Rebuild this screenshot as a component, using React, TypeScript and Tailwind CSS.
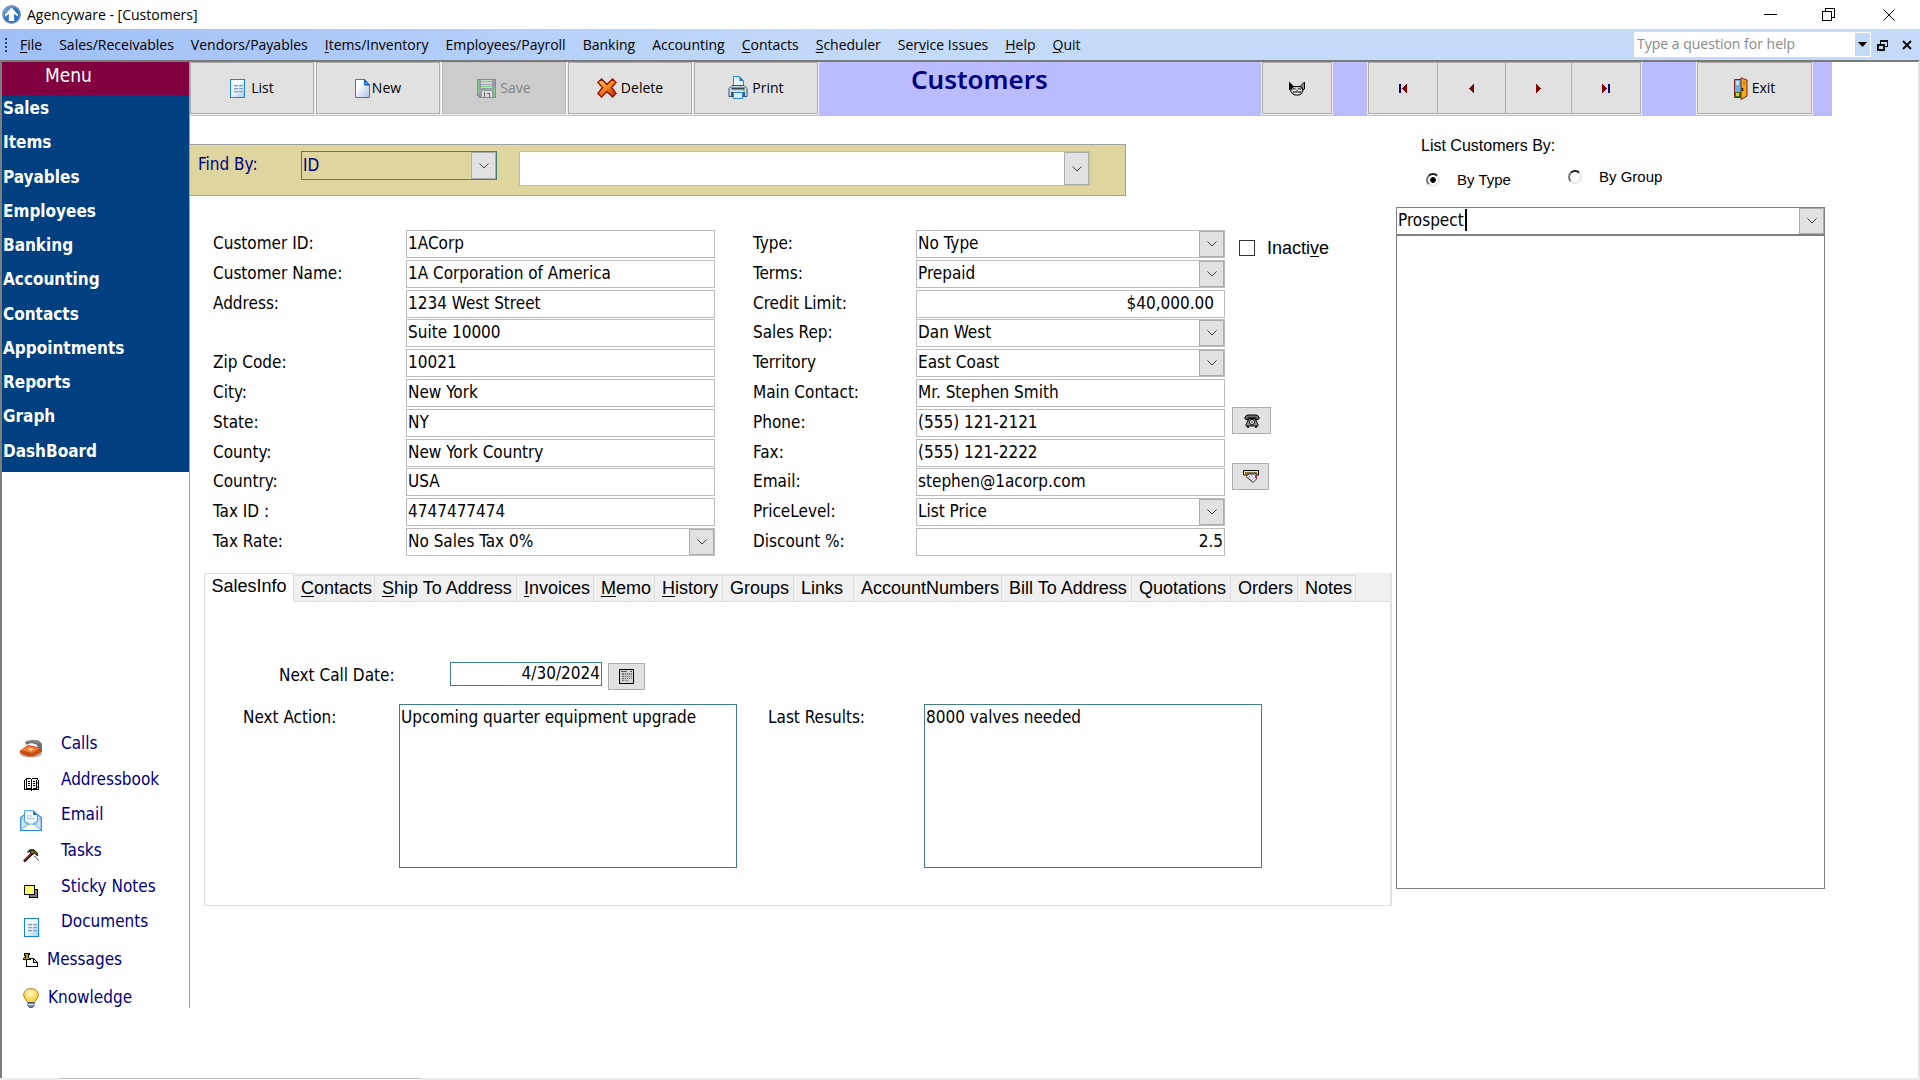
import { useState } from 'react';
import type { ReactNode } from 'react';

const TAHOMA = "font-['DejaVu_Sans_Condensed','DejaVu_Sans',sans-serif]";
const SEGOE = "font-['Open_Sans','Noto_Sans',sans-serif]";
const ARIAL = "font-['Liberation_Sans',Arial,sans-serif]";

// text before the accelerator, the accelerator, text after it
type Accel = [string, string, string];

const menuItems: Accel[] = [
  ['', 'F', 'ile'],
  ['Sales/Receivables', '', ''],
  ['Vendors/Payables', '', ''],
  ['', 'I', 'tems/Inventory'],
  ['Employees/Payroll', '', ''],
  ['Banking', '', ''],
  ['Accounting', '', ''],
  ['', 'C', 'ontacts'],
  ['', 'S', 'cheduler'],
  ['Ser', 'v', 'ice Issues'],
  ['', 'H', 'elp'],
  ['', 'Q', 'uit'],
];

const navItems = [
  'Sales',
  'Items',
  'Payables',
  'Employees',
  'Banking',
  'Accounting',
  'Contacts',
  'Appointments',
  'Reports',
  'Graph',
  'DashBoard',
];

const tabs: { label: Accel; width: string }[] = [
  { label: ['', 'C', 'ontacts'], width: 'w-[81px]' },
  { label: ['', 'S', 'hip To Address'], width: 'w-[142px]' },
  { label: ['', 'I', 'nvoices'], width: 'w-[77px]' },
  { label: ['', 'M', 'emo'], width: 'w-[61px]' },
  { label: ['', 'H', 'istory'], width: 'w-[68px]' },
  { label: ['Groups', '', ''], width: 'w-[71px]' },
  { label: ['Links', '', ''], width: 'w-[60px]' },
  { label: ['AccountNumbers', '', ''], width: 'w-[148px]' },
  { label: ['Bill To Address', '', ''], width: 'w-[130px]' },
  { label: ['Quotations', '', ''], width: 'w-[99px]' },
  { label: ['Orders', '', ''], width: 'w-[67px]' },
  { label: ['Notes', '', ''], width: 'w-[58px]' },
];

type FieldDef = { label: string; value: string; kind?: 'select' | 'money' | 'number' };

const leftFields: FieldDef[] = [
  { label: 'Customer ID:', value: '1ACorp' },
  { label: 'Customer Name:', value: '1A Corporation of America' },
  { label: 'Address:', value: '1234 West Street' },
  { label: '', value: 'Suite 10000' },
  { label: 'Zip Code:', value: '10021' },
  { label: 'City:', value: 'New York' },
  { label: 'State:', value: 'NY' },
  { label: 'County:', value: 'New York Country' },
  { label: 'Country:', value: 'USA' },
  { label: 'Tax ID :', value: '4747477474' },
  { label: 'Tax Rate:', value: 'No Sales Tax 0%', kind: 'select' },
];

const rightFields: FieldDef[] = [
  { label: 'Type:', value: 'No Type', kind: 'select' },
  { label: 'Terms:', value: 'Prepaid', kind: 'select' },
  { label: 'Credit Limit:', value: '$40,000.00', kind: 'money' },
  { label: 'Sales Rep:', value: 'Dan West', kind: 'select' },
  { label: 'Territory', value: 'East Coast', kind: 'select' },
  { label: 'Main Contact:', value: 'Mr. Stephen Smith' },
  { label: 'Phone:', value: '(555) 121-2121' },
  { label: 'Fax:', value: '(555) 121-2222' },
  { label: 'Email:', value: 'stephen@1acorp.com' },
  { label: 'PriceLevel:', value: 'List Price', kind: 'select' },
  { label: 'Discount %:', value: '2.5', kind: 'number' },
];

function AccelText({ text }: { text: Accel }) {
  return (
    <>
      {text[0]}
      {text[1] && <span className="underline underline-offset-2">{text[1]}</span>}
      {text[2]}
    </>
  );
}

/* ---------- icons ---------- */

function LogoIcon() {
  return (
    <svg width="19" height="19" viewBox="0 0 19 19">
      <defs>
        <linearGradient id="logo" x1="0" y1="0" x2="1" y2="1">
          <stop offset="0" stopColor="#8fb6e4" />
          <stop offset="0.5" stopColor="#2f6fc0" />
          <stop offset="1" stopColor="#1d6fd6" />
        </linearGradient>
      </defs>
      <circle cx="9.5" cy="9.5" r="8.800" fill="url(#logo)" stroke="#7d97b5" strokeWidth="1.200" />
      <path d="M9.500 2.500 16 9.500v2l-4-2.500.300 7H6.700L7 9 3 11.500v-2z" fill="#fff" />
    </svg>
  );
}

function SheetIcon() {
  return (
    <svg width="15" height="19" viewBox="0 0 15 19" shapeRendering="crispEdges">
      <defs>
        <linearGradient id="sheet" x1="0" y1="0" x2="1" y2="1">
          <stop offset="0.4" stopColor="#f4faff" />
          <stop offset="1" stopColor="#a9c9ee" />
        </linearGradient>
      </defs>
      <rect x="0.5" y="0.5" width="14" height="18" fill="url(#sheet)" stroke="#1484dc" />
      <path d="M4 6.500h4M9 6.500h4M4 9.500h4M9 9.500h4M4 12.500h4M9 12.500h4" stroke="#7f9bc4" />
      <path d="M4 7.500h4M9 7.500h4M4 10.500h4M9 10.500h4M4 13.500h4M9 13.500h4" stroke="#c3d3ea" />
    </svg>
  );
}

function NewIcon() {
  return (
    <svg width="15" height="19" viewBox="0 0 15 19">
      <defs>
        <linearGradient id="page" x1="0" y1="0" x2="1" y2="1">
          <stop offset="0.3" stopColor="#ffffff" />
          <stop offset="1" stopColor="#a6c3e6" />
        </linearGradient>
      </defs>
      <path d="M.5.5H9.500L14.500 6V18.500H.500z" fill="url(#page)" stroke="#1484dc" />
      <path d="M9.500.500V6h5z" fill="#0c63b8" stroke="#0c63b8" />
      <path d="M10.500 3v2h2z" fill="#9fd0f7" />
    </svg>
  );
}

function SaveIcon() {
  return (
    <svg width="19" height="19" viewBox="0 0 19 19" shapeRendering="crispEdges">
      <path d="M.5.5h18v18H3L.500 16z" fill="#9a9da8" stroke="#8488ac" />
      <rect x="4" y="1" width="11" height="8" fill="#c9dcc8" />
      <path d="M4 2.500h11M4 7.500h11" stroke="#74d882" />
      <path d="M4 5h11" stroke="#b7a0c8" />
      <rect x="5" y="12" width="10" height="6" fill="#dcdcdc" />
      <path d="M7.500 13v5M10 14.500h2v3" stroke="#66666f" fill="none" />
      <path d="M17.500 9v9M1.500 1v14" stroke="#7fcf8a" />
    </svg>
  );
}

function DeleteIcon() {
  return (
    <svg width="20" height="20" viewBox="0 0 20 20">
      <defs>
        <linearGradient id="del" x1="0" y1="0" x2="0.7" y2="1">
          <stop offset="0" stopColor="#ffd14a" />
          <stop offset="0.5" stopColor="#f7941e" />
          <stop offset="1" stopColor="#c8320e" />
        </linearGradient>
      </defs>
      <path
        d="M4.500 1 10 6.500 15.500 1 19 4.500l-4.500 5L19 15.500 15.500 19 10 13.500 4.500 19 1 15.500l4.500-6L1 4.500z"
        fill="url(#del)"
        stroke="#9c1506"
        strokeWidth="1.5"
      />
    </svg>
  );
}

function PrintIcon() {
  return (
    <svg width="20" height="24" viewBox="0 0 20 24">
      <path d="M5.500 11V.500h6L15.500 5v6z" fill="#e8f3ff" stroke="#1e88e5" />
      <path d="M11.500.500V5h4z" fill="#1e73c4" />
      <path d="M1 12.500 4 9.500h12l3 3v8H1z" fill="#d4dde6" stroke="#24527c" />
      <path d="M3.500 12.500h13" stroke="#2f4558" strokeWidth="2" />
      <path d="M3 16h14v4H3z" fill="#3f5b75" />
      <path d="M5.500 16.500h9v6h-9z" fill="#dceeff" stroke="#1e88e5" />
      <path d="M15 14.500h2" stroke="#4caf50" />
    </svg>
  );
}

function CatIcon() {
  return (
    <svg width="16" height="15" viewBox="0 0 16 15">
      <path d="M0 .500 5 5.500 3 6.500 1 9H0z" fill="#000" />
      <path d="M15.500 1v7l-1.500 1-1-2.500-2-1z" fill="#8d8d8d" stroke="#000" />
      <path d="M3 6.500 5 5.500h6l2 1.500 1 3-2 3-2 1H6l-2-1-2.500-3z" fill="#c9c9c9" stroke="#000" />
      <path d="M3.500 8h3M9 8h3M4 11h8" stroke="#000" />
      <path d="M4 9.300h3M8.500 9.300h3M6 12.300h4" stroke="#fff" />
      <path d="M7 10h2" stroke="#555" />
    </svg>
  );
}

function ExitIcon() {
  return (
    <svg width="14" height="23" viewBox="0 0 14 23">
      <path d="M.5 2.500h8v18h-8z" fill="#5fb4ee" stroke="#8b1a10" />
      <path d="M2 4h3v4H2z" fill="#b9e2ff" />
      <path d="M1 15h6v5H1z" fill="#237a2c" />
      <path d="M2 16h3v3H2z" fill="#d7d32a" />
      <path d="M7 .800 13 3v16l-6 3.500z" fill="#f0a818" stroke="#8b1a10" />
      <path d="M9 4.500h2v3H9z" fill="#c98a10" />
      <path d="M8.500 11v3" stroke="#201000" strokeWidth="1.500" />
    </svg>
  );
}

function PrevArrow() {
  return (
    <svg width="5" height="9" viewBox="0 0 5 9" shapeRendering="crispEdges">
      <path d="M5 0v9L0 4.500z" fill="#800000" />
    </svg>
  );
}

function NextArrow() {
  return (
    <svg width="5" height="9" viewBox="0 0 5 9" shapeRendering="crispEdges">
      <path d="M0 0v9l5-4.500z" fill="#800000" />
    </svg>
  );
}

function Bar() {
  return (
    <svg width="2" height="9" viewBox="0 0 2 9">
      <rect width="2" height="9" fill="#000080" />
    </svg>
  );
}

function PhoneIcon() {
  return (
    <svg width="16" height="14" viewBox="0 0 16 14">
      <path d="M1 5V3l2-2h10l2 2v2l-3 1V4H4v2z" fill="#6b6b6b" stroke="#000" />
      <path d="M5 4.500h6l3 6V12H2v-1.500z" fill="#8c8c8c" stroke="#000" />
      <circle cx="8" cy="8" r="2.500" fill="#fff" stroke="#000" />
      <circle cx="8" cy="8" r="0.800" fill="#000" />
      <path d="M3 13h2M11 13h2" stroke="#000" strokeWidth="1.500" />
    </svg>
  );
}

function MailSlotIcon() {
  return (
    <svg width="16" height="13" viewBox="0 0 16 13">
      <path d="M.5.500h15v4.500H.500z" fill="#ffe27a" stroke="#000" />
      <path d="M2 3h12" stroke="#000" />
      <path d="M3 6.500 6 4h7.500v5L10 12.500z" fill="#f4f4ff" stroke="#333" />
      <path d="M6 6l4 4M8 5l3.500 4M5.500 7.500 9 11" stroke="#4a4ad0" strokeDasharray="1 1" />
      <rect x="12" y="5" width="2" height="3" fill="#e02020" />
    </svg>
  );
}

function CalendarIcon() {
  return (
    <svg width="15" height="15" viewBox="0 0 15 15" shapeRendering="crispEdges">
      <rect x="0.500" y="0.500" width="14" height="14" fill="#d6d6d6" stroke="#000" />
      <path d="M2 2.500h6M11 2.500h2" stroke="#555" />
      <path d="M3 4h10v6h-4v2H3z" fill="#777" />
      <path d="M3 6.500h10M3 8.500h10M3 10.500h6M5.500 4v8M7.500 4v8M9.500 4v6M11.500 4v6" stroke="#c4c4c4" />
    </svg>
  );
}

function RedPhoneIcon() {
  return (
    <svg width="24" height="19" viewBox="0 0 24 19">
      <ellipse cx="12" cy="15" rx="11" ry="3.500" fill="#b8b0a8" />
      <path d="M1 11.500 9 6l14 3v4l-9 4.500H9L1 14z" fill="#c94a12" />
      <path d="M2 11 9 7l12 2.500-8 4.500z" fill="#ee7a34" />
      <path d="M8 10.500 11 9l4 1-3 2z" fill="#f9c49a" />
      <path d="M6 3.500C9 0 18 0 21.500 3c2 2 2 5 .5 7l-3-1c0-3-2-4-5-4.500S9 5 8 6z" fill="#6e6e6e" />
      <path d="M9 2.500c4-1.500 8-.500 11 1.500" stroke="#aaa" fill="none" />
    </svg>
  );
}

function BookIcon() {
  return (
    <svg width="15" height="13" viewBox="0 0 15 13" shapeRendering="crispEdges">
      <path d="M.5 2.500 2 1.500V.500h4l1.500 1L9 .500h4v1l1.500 1v9H9L7.500 12.500 6 11.500H.500z" fill="#fff" stroke="#000" />
      <path d="M7.500 2v10M2.500 2v8h4M12.500 2v8h-4" stroke="#000" fill="none" />
      <path d="M4 3.500h2M4 5.500h2M4 7.500h2M9 3.500h2M9 5.500h2M9 7.500h2" stroke="#000" />
      <path d="M13.500 4v2M13.500 8v2" stroke="#d09020" />
    </svg>
  );
}

function OpenMailIcon() {
  return (
    <svg width="22" height="21" viewBox="0 0 22 21">
      <path d="M.7 7.500 4 5h14l3.300 2.500v13H.700z" fill="#cfe4fb" stroke="#2b86de" strokeWidth="1.200" />
      <path d="M4.500 12V.700h9L17.500 4v8l-6.500 4z" fill="#f3f9ff" stroke="#4f9be6" />
      <path d="M13 .700V5h4.500z" fill="#1b73cf" />
      <path d="M7 6h5M7 8.500h8" stroke="#9dc3ec" />
      <path d="M1 8l8 6h4l8-6M1 20l7.500-7M21 20l-7.500-7" stroke="#7db4ec" fill="none" />
      <path d="M2 20l7-5h4l7 5z" fill="#fff" />
    </svg>
  );
}

function HammerIcon() {
  return (
    <svg width="17" height="13" viewBox="0 0 17 13">
      <path d="M1 12.500 9 4.500" stroke="#000" strokeWidth="2.500" />
      <path d="M1.500 11.500 8.500 4.500" stroke="#a83030" />
      <path d="M4.500 3 7 .800h4l3 3 .500 3-3-2.500L9 6 7.500 4V2.500z" fill="#6b6414" stroke="#000" />
      <path d="M11.500 7l4.500 5" stroke="#000" strokeDasharray="2 1" />
    </svg>
  );
}

function NoteIcon() {
  return (
    <svg width="14" height="13" viewBox="0 0 14 13" shapeRendering="crispEdges">
      <rect x="5.500" y="4.500" width="8" height="8" fill="#808080" stroke="#000" />
      <rect x="0.500" y="0.500" width="10" height="9" fill="#ffff70" stroke="#000" />
    </svg>
  );
}

function PinIcon() {
  return (
    <svg width="15" height="14" viewBox="0 0 15 14" shapeRendering="crispEdges">
      <path d="M3.500 13.500v-8h7l4 4v4z" fill="#fff" stroke="#000" />
      <path d="M10.500 6v3.500H14" stroke="#000" fill="none" />
      <path d="M1 .500h5v1L5 2.500v2l2 1v1H0v-1l2-1v-2L1 1.500z" fill="#b5ab18" stroke="#000" />
      <path d="M3.500 7v4" stroke="#000" />
    </svg>
  );
}

function BulbIcon() {
  return (
    <svg width="16" height="20" viewBox="0 0 16 20">
      <defs>
        <radialGradient id="bulb" cx="0.45" cy="0.35">
          <stop offset="0" stopColor="#fffbc8" />
          <stop offset="1" stopColor="#ffd34a" />
        </radialGradient>
      </defs>
      <path
        d="M8 .700C3.500.700.700 3.500.700 7c0 3 2.800 4.500 3.800 7.500h7c1-3 3.800-4.500 3.800-7.500C15.300 3.500 12.500.700 8 .700z"
        fill="url(#bulb)"
        stroke="#b07a12"
      />
      <path d="M5 14.500h6v3.500l-1.500 1.500h-3L5 18z" fill="#6f8ea8" stroke="#3f5a70" />
      <path d="M5 16.500h6" stroke="#dfe9f0" />
    </svg>
  );
}

function DropGlyph() {
  return (
    <svg width="10" height="6" viewBox="0 0 10 6" fill="none" stroke="#444">
      <path d="M.5.500 5 5 9.500.500" />
    </svg>
  );
}

/* ---------- controls ---------- */

function Combo({ id, label, value, box, frame = 'border-[#bcbcbc]' }: {
  id: string;
  label?: string;
  value: string;
  box: string;
  frame?: string;
}) {
  return (
    <div className={`relative ${box}`}>
      <select
        id={id}
        aria-label={label}
        defaultValue={value}
        className={`w-full h-full appearance-none border bg-transparent pl-px pr-7 pb-0.5 leading-6 outline-none ${frame}`}
      >
        <option value={value}>{value}</option>
      </select>
      <span className="pointer-events-none absolute inset-y-px right-px flex w-[25px] items-center justify-center border border-[#adadad] bg-[#e1e1e1]">
        <DropGlyph />
      </span>
    </div>
  );
}

function Fields({ fields, prefix, labelWidth }: { fields: FieldDef[]; prefix: string; labelWidth: string }) {
  return (
    <div className="flex h-[326px] flex-col justify-between">
      {fields.map((f, i) => {
        const id = `${prefix}-${i}`;
        return (
          <div key={id} className="flex h-7">
            <label htmlFor={id} className={`shrink-0 leading-[26px] ${labelWidth}`}>
              {f.label}
            </label>
            {f.kind === 'select' ? (
              <Combo id={id} value={f.value} box="h-7 w-[309px]" />
            ) : (
              <input
                id={id}
                type="text"
                aria-label={f.label ? undefined : 'Address line 2'}
                defaultValue={f.value}
                className={`h-7 w-[309px] border border-[#bcbcbc] pb-0.5 outline-none ${
                  f.kind === 'money' ? 'pr-2.5 text-right' : f.kind === 'number' ? 'pr-px text-right' : 'pl-px'
                }`}
              />
            )}
          </div>
        );
      })}
    </div>
  );
}

function ToolButton({ icon, children, label, width, gap = 'gap-1', disabled }: {
  icon: ReactNode;
  children?: ReactNode;
  label?: string;
  width: string;
  gap?: string;
  disabled?: boolean;
}) {
  return (
    <button
      type="button"
      disabled={disabled}
      aria-label={label}
      className={`flex h-[52px] items-center justify-center border border-[#adadad] bg-[#e1e1e1] text-sm disabled:border-[#bfbfbf] disabled:bg-[#cccccc] disabled:text-[#838383] ${width} ${gap}`}
    >
      {icon}
      {children}
    </button>
  );
}

function NavButton({ label, children, width }: { label: string; children: ReactNode; width: string }) {
  return (
    <button
      type="button"
      aria-label={label}
      className={`flex h-[52px] items-center justify-center gap-px border border-l-0 border-[#adadad] bg-[#e1e1e1] first:border-l ${width}`}
    >
      {children}
    </button>
  );
}

function IconButton({ label, children, width = 'w-[37px]' }: { label: string; children: ReactNode; width?: string }) {
  return (
    <button
      type="button"
      aria-label={label}
      className={`flex h-[27px] items-center justify-center border border-[#adadad] bg-[#e1e1e1] ${width}`}
    >
      {children}
    </button>
  );
}

function Shortcut({ icon, children }: { icon: ReactNode; children: ReactNode }) {
  return (
    <a href="#" className="flex flex-1">
      <span className="flex w-[54px] shrink-0 items-center justify-center">{icon}</span>
      <span className="pl-[3px] leading-6">{children}</span>
    </a>
  );
}

/* ---------- page parts ---------- */

function TitleBar() {
  return (
    <header className={`flex h-[29px] items-center bg-white pl-0.5 text-sm ${SEGOE}`}>
      <LogoIcon />
      <span className="pl-1.5">Agencyware - [Customers]</span>
      <div className="ml-auto flex items-center">
        <button type="button" aria-label="Minimize" className="flex w-[58px] justify-center">
          <svg width="13" height="13" viewBox="0 0 13 13" shapeRendering="crispEdges">
            <path d="M0 6.500h13" stroke="#000" />
          </svg>
        </button>
        <button type="button" aria-label="Restore" className="flex w-[58px] justify-center">
          <svg width="13" height="13" viewBox="0 0 13 13" fill="none" stroke="#000" shapeRendering="crispEdges">
            <path d="M.500 3.500h9v9h-9zM3.500 3V.500h9v9H10" />
          </svg>
        </button>
        <button type="button" aria-label="Close" className="flex w-[63px] justify-center">
          <svg width="12" height="12" viewBox="0 0 12 12" stroke="#000">
            <path d="M.5.500l11 11M11.500.500l-11 11" />
          </svg>
        </button>
      </div>
    </header>
  );
}

function MenuBar() {
  return (
    <nav
      className={`flex h-[31px] items-center bg-linear-to-r from-[#9fbff6] to-[#c4daf9] to-45% pl-[5px] text-sm ${SEGOE}`}
    >
      <span className="flex w-[15px] flex-col gap-0.5">
        <i className="size-0.5 bg-[#27417f]" />
        <i className="size-0.5 bg-[#27417f]" />
        <i className="size-0.5 bg-[#27417f]" />
        <i className="size-0.5 bg-[#27417f]" />
      </span>
      <div className="flex gap-[17px]">
        {menuItems.map((item) => (
          <a key={item.join('')} href="#" className="whitespace-nowrap">
            <AccelText text={item} />
          </a>
        ))}
      </div>
      <div className="ml-auto flex h-[25px] w-[237px] border border-white">
        <input
          type="text"
          aria-label="Help question"
          placeholder="Type a question for help"
          className="min-w-0 flex-1 bg-white pl-0.5 pb-0.5 outline-none placeholder:text-[#8a8a8a]"
        />
        <button type="button" aria-label="Help topics" className="flex w-[15px] items-center justify-center">
          <svg width="9" height="5" viewBox="0 0 9 5">
            <path d="M0 0h9L4.500 5z" />
          </svg>
        </button>
      </div>
      <button type="button" aria-label="Restore form" className="ml-1.5">
        <svg width="11" height="12" viewBox="0 0 11 12" fill="none" stroke="#111" shapeRendering="crispEdges">
          <path d="M1 6h6v5H1z" strokeWidth="2" />
          <path d="M3.500 5V1.500h7v6H8M3 2.500h8" />
        </svg>
      </button>
      <button type="button" aria-label="Close form" className="mr-2 ml-3.5">
        <svg width="10" height="10" viewBox="0 0 10 10" stroke="#111" strokeWidth="2">
          <path d="M1 1l8 8M9 1L1 9" />
        </svg>
      </button>
    </nav>
  );
}

function Sidebar() {
  return (
    <aside className={`flex w-[188px] shrink-0 flex-col self-start border-r border-[#a0a0a0] ${TAHOMA}`}>
      <div className="h-[33px] bg-[#800040] pl-[43px] text-[19px] leading-[27px] text-white">Menu</div>
      <nav className="flex h-[377px] flex-col bg-[#004080] text-[17px] font-bold text-white">
        {navItems.map((item) => (
          <a key={item} href="#" className="flex-1 pl-px leading-[26px]">
            {item}
          </a>
        ))}
      </nav>
      <nav className="mt-[259px] text-[17px] text-[#000080]">
        <div className="flex h-[214px] flex-col pl-0.5">
          <Shortcut icon={<RedPhoneIcon />}>Calls</Shortcut>
          <Shortcut icon={<BookIcon />}>Addressbook</Shortcut>
          <Shortcut icon={<OpenMailIcon />}>Email</Shortcut>
          <Shortcut icon={<HammerIcon />}>Tasks</Shortcut>
          <Shortcut icon={<NoteIcon />}>Sticky Notes</Shortcut>
          <Shortcut icon={<SheetIcon />}>Documents</Shortcut>
        </div>
        <div className="flex flex-col gap-[18px] pt-[5px] pl-[21px]">
          <a href="#" className="flex h-5 items-center gap-[9px]">
            <PinIcon />
            Messages
          </a>
          <a href="#" className="flex h-5 items-center gap-[9px]">
            <BulbIcon />
            Knowledge
          </a>
        </div>
      </nav>
    </aside>
  );
}

function Toolbar() {
  return (
    <div className={`mr-[86px] flex h-[54px] items-start bg-[#bbbbff] ${SEGOE}`}>
      <div className="flex gap-0.5 bg-[#f0f0f0] pr-px pb-px">
        <ToolButton icon={<SheetIcon />} width="w-[124px]" gap="gap-1.5">List</ToolButton>
        <ToolButton icon={<NewIcon />} width="w-[124px]" gap="gap-0.5">New</ToolButton>
        <ToolButton icon={<SaveIcon />} width="w-[124px]" disabled>Save</ToolButton>
        <ToolButton icon={<DeleteIcon />} width="w-[124px]">Delete</ToolButton>
        <ToolButton icon={<PrintIcon />} width="w-[124px]">Print</ToolButton>
      </div>
      <h1 className="flex-1 pl-[92px] font-['Noto_Sans','Open_Sans',sans-serif] text-[26px] leading-[34px] font-semibold text-[#000080]">
        Customers
      </h1>
      <div className="mr-[34px] bg-[#f0f0f0] px-px pb-px">
        <ToolButton icon={<CatIcon />} label="Lookup" width="w-[70px]" />
      </div>
      <div className="mr-[54px] flex bg-[#f0f0f0] px-px pb-px">
        <NavButton label="First record" width="w-[70px]"><Bar /><PrevArrow /></NavButton>
        <NavButton label="Previous record" width="w-[68px]"><PrevArrow /></NavButton>
        <NavButton label="Next record" width="w-[66px]"><NextArrow /></NavButton>
        <NavButton label="Last record" width="w-[69px]"><NextArrow /><Bar /></NavButton>
      </div>
      <div className="mr-[19px] bg-[#f0f0f0] px-px pb-px">
        <ToolButton icon={<ExitIcon />} width="w-[115px]">Exit</ToolButton>
      </div>
    </div>
  );
}

function SalesInfo() {
  return (
    <>
      <div className="flex pt-[60px] pl-[74px]">
        <label htmlFor="call-date" className="w-[171px] leading-[26px]">Next Call Date:</label>
        <input
          id="call-date"
          type="text"
          defaultValue="4/30/2024"
          className="h-6 w-[152px] border border-[#408080] pr-px text-right outline-none"
        />
        <div className="pt-px pl-1.5">
          <IconButton label="Pick date"><CalendarIcon /></IconButton>
        </div>
      </div>
      <div className="flex pt-[14px] pl-[38px]">
        <label htmlFor="next-action" className="w-[156px] leading-[26px]">Next Action:</label>
        <textarea
          id="next-action"
          defaultValue="Upcoming quarter equipment upgrade"
          className="h-[164px] w-[338px] resize-none border border-[#408080] pl-px leading-6 outline-none"
        />
        <label htmlFor="last-results" className="ml-[31px] w-[156px] leading-[26px]">Last Results:</label>
        <textarea
          id="last-results"
          defaultValue="8000 valves needed"
          className="h-[164px] w-[338px] resize-none border border-[#408080] pl-px leading-6 outline-none"
        />
      </div>
    </>
  );
}

function CustomerForm() {
  return (
    <section className="min-w-0 flex-1">
      <div className="mt-7 flex h-[52px] w-[936px] border-y border-r border-[#a0a0a0] bg-[#dfd69f] pl-2 text-[#000080]">
        <label htmlFor="find-by" className="w-[103px] leading-[38px]">Find By:</label>
        <div className="flex items-start gap-[22px] pt-1.5">
          <Combo id="find-by" value="ID" box="h-[29px] w-[196px]" frame="border-[#408080]" />
          <Combo id="find-value" label="Find value" value="" box="h-[35px] w-[571px] bg-white" />
        </div>
      </div>

      <form className="mt-[34px] flex pl-[23px]">
        <Fields fields={leftFields} prefix="left" labelWidth="w-[193px]" />
        <div className="ml-[38px]">
          <Fields fields={rightFields} prefix="right" labelWidth="w-[163px]" />
        </div>
        <div className="pl-[7px]">
          <label className={`flex items-center gap-3 pt-1.5 pl-[7px] text-lg leading-6 ${ARIAL}`}>
            <input type="checkbox" className="size-4 appearance-none border border-[#333] bg-white" />
            <span>
              Inacti<span className="underline underline-offset-2">v</span>e
            </span>
          </label>
          <div className="flex flex-col gap-[29px] pt-[147px]">
            <IconButton label="Dial phone" width="w-[39px]"><PhoneIcon /></IconButton>
            <IconButton label="Send email"><MailSlotIcon /></IconButton>
          </div>
        </div>
      </form>

      <div className="mt-[17px] mr-1 ml-3.5 border-r-2 border-b border-[#e3e3e3]">
        <div role="tablist" className={`flex h-[29px] bg-[#f0f0f0] text-lg ${ARIAL}`}>
          <button
            type="button"
            role="tab"
            aria-selected="true"
            className="w-[90px] border border-b-0 border-[#dcdcdc] bg-white pb-1 text-center leading-6"
          >
            SalesInfo
          </button>
          <div className="flex flex-1 border-b border-[#dcdcdc] pt-0.5">
            {tabs.map((tab) => (
              <button
                key={tab.label.join('')}
                type="button"
                role="tab"
                aria-selected="false"
                className={`border-t border-r border-[#dcdcdc] pb-0.5 pl-[7px] text-left leading-6 whitespace-nowrap ${tab.width}`}
              >
                <AccelText text={tab.label} />
              </button>
            ))}
          </div>
        </div>
        <div role="tabpanel" className="h-[303px] border-l border-[#dcdcdc]">
          <SalesInfo />
        </div>
      </div>
    </section>
  );
}

function CustomerList() {
  const [mode, setMode] = useState('type');
  const radio =
    'size-3.5 appearance-none rounded-full border-2 border-t-[#222] border-r-[#e8e8e8] border-b-[#e8e8e8] border-l-[#777] bg-white checked:bg-[radial-gradient(#000_35%,#fff_45%)]';
  return (
    <section className="w-[429px] shrink-0 pt-[18px]">
      <fieldset className={ARIAL}>
        <legend className="pl-[25px] text-base leading-6">List Customers By:</legend>
        <div className="mt-[9px] flex h-[23px] pl-[30px] text-[15px] leading-5">
          <label className="flex w-[142px] items-center gap-[17px] self-end">
            <input type="radio" name="list-by" checked={mode === 'type'} onChange={() => setMode('type')} className={radio} />
            By Type
          </label>
          <label className="flex items-center gap-[17px] self-start">
            <input type="radio" name="list-by" checked={mode === 'group'} onChange={() => setMode('group')} className={radio} />
            By Group
          </label>
        </div>
      </fieldset>
      <div className="relative mt-[17px]">
        <Combo id="list-filter" label="Customer type" value="Prospect" box="h-7" frame="border-[#808080]" />
        <span className="pointer-events-none absolute top-0.5 left-[69px] h-[22px] w-0.5 bg-black" />
      </div>
      <div role="listbox" aria-label="Customers" className="h-[654px] border border-[#808080]" />
    </section>
  );
}

export default function App() {
  return (
    <div className="flex min-h-screen flex-col bg-white text-black">
      <TitleBar />
      <MenuBar />
      <div className="flex flex-1 border-t-2 border-r-2 border-l-2 border-t-[#7a7a7a] border-r-[#e3e3e3] border-l-[#7d7d7d]">
        <Sidebar />
        <main className={`min-w-0 flex-1 text-[17px] ${TAHOMA}`}>
          <Toolbar />
          <div className="flex pr-[93px]">
            <CustomerForm />
            <CustomerList />
          </div>
        </main>
      </div>
      <footer className="flex h-0.5 bg-[#ebebeb] pl-[60px]">
        <div className="w-[360px] border-t border-[#c0c0c0] bg-white" />
      </footer>
    </div>
  );
}
